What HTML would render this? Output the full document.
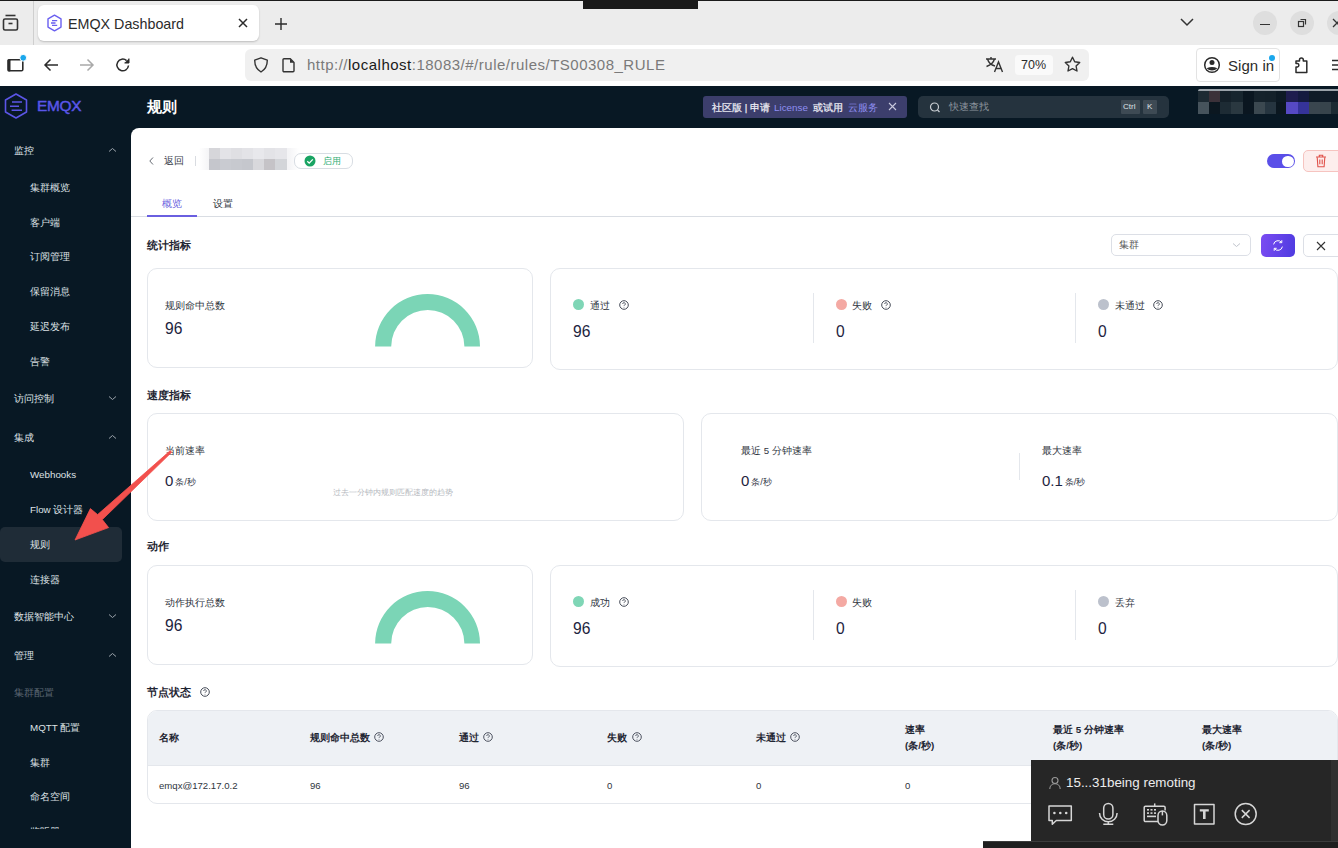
<!DOCTYPE html>
<html><head><meta charset="utf-8">
<style>
*{margin:0;padding:0;box-sizing:border-box}
html,body{width:1338px;height:848px;overflow:hidden;background:#fff;font-family:"Liberation Sans",sans-serif}
.a{position:absolute}
#tabbar{left:0;top:0;width:1338px;height:45px;background:#ececec;border-top:1px solid #1a1a1a}
#toolbar{left:0;top:45px;width:1338px;height:41px;background:#fff}
#app{left:0;top:86px;width:1338px;height:762px;background:#081824}
#card{left:131px;top:128px;width:1207px;height:720px;background:#fff;border-top-left-radius:8px}
.side{color:#dde1e5;font-size:10.2px;white-space:nowrap;line-height:12px;margin-top:1px}
.side.sub{left:30px}
.side.top{left:14px}
.chev{width:6px;height:6px;border-left:1px solid #9aa3ad;border-top:1px solid #9aa3ad}
.h2{font-size:11px;font-weight:bold;color:#1f2633;white-space:nowrap;line-height:12px}
.box{border:1px solid #e4e7ec;border-radius:10px;background:#fff}
.lab{font-size:9.7px;color:#2f3540;white-space:nowrap;line-height:12px}
.cl{margin-top:1px}
.num{margin-top:2px}
.num{font-size:15.6px;color:#1d2440;white-space:nowrap;line-height:16px}
.dot{width:11px;height:11px;border-radius:50%}
.q{width:8px;height:8px;border:1px solid #6b7280;border-radius:50%}
.vdiv{width:1px;background:#e4e7ec}
.th{font-size:9.8px;font-weight:bold;color:#1f2633;white-space:nowrap;line-height:16px;margin-top:1px}
.td{font-size:9.6px;color:#2f3540;white-space:nowrap;line-height:12px;margin-top:1px}
</style></head><body>
<!-- browser chrome -->
<div id="tabbar" class="a"></div>
<div class="a" style="left:583px;top:0;width:115px;height:9px;background:#1a1a1a"></div>
<div class="a" style="left:33px;top:1px;width:1px;height:44px;background:#cfcfcf"></div>
<svg class="a" style="left:0;top:10px" width="26" height="26" viewBox="0 0 26 26"><g fill="none" stroke="#333" stroke-width="1.6"><rect x="3.5" y="9" width="14" height="11" rx="1.5"/><path d="M5.5 5.5h10"/><path d="M8.5 13.5h4" stroke-width="1.6"/></g></svg>
<div class="a" style="left:38px;top:5px;width:221px;height:36px;background:#fff;border-radius:6px;box-shadow:0 1px 2px rgba(0,0,0,.2)"></div>
<svg class="a" style="left:46px;top:14px" width="17" height="18" viewBox="0 0 17 18"><path d="M8.5 1.2L15 4.9v8.2L8.5 16.8 2 13.1V4.9z" fill="none" stroke="#6a5ff0" stroke-width="1.4" stroke-linejoin="round"/><path d="M6 6.6h5.2M5 9h4.5M6 11.4h5.2" stroke="#6a5ff0" stroke-width="1.3"/></svg>
<div class="a" style="left:68px;top:15px;font-size:14.3px;color:#2b2b2b;line-height:18px">EMQX Dashboard</div>
<svg class="a" style="left:237px;top:17px" width="12" height="12" viewBox="0 0 12 12"><path d="M2 2L10 10M10 2L2 10" stroke="#2b2b2b" stroke-width="1.5"/></svg>
<svg class="a" style="left:274px;top:17px" width="14" height="14" viewBox="0 0 14 14"><path d="M7 1v12M1 7h12" stroke="#2b2b2b" stroke-width="1.4"/></svg>
<svg class="a" style="left:1179px;top:16px" width="16" height="12" viewBox="0 0 16 12"><path d="M2 3l6 6 6-6" fill="none" stroke="#333" stroke-width="1.5"/></svg>
<div class="a" style="left:1253px;top:11px;width:24px;height:24px;border-radius:50%;background:#dedede"></div>
<div class="a" style="left:1260px;top:24px;width:10px;height:1px;background:#333"></div>
<div class="a" style="left:1290px;top:11px;width:24px;height:24px;border-radius:50%;background:#dedede"></div>
<svg class="a" style="left:1296px;top:17px" width="12" height="12" viewBox="0 0 12 12"><g fill="none" stroke="#333" stroke-width="1.2"><rect x="2.5" y="4.5" width="5" height="5"/><path d="M4.5 2.5h5v5"/></g></svg>
<div class="a" style="left:1327px;top:11px;width:24px;height:24px;border-radius:50%;background:#dedede"></div>
<svg class="a" style="left:1332px;top:18px" width="10" height="10" viewBox="0 0 10 10"><path d="M1 1l8 8M9 1L1 9" stroke="#333" stroke-width="1.3"/></svg>

<div id="toolbar" class="a"></div>
<svg class="a" style="left:5px;top:52px" width="24" height="22" viewBox="0 0 24 22"><rect x="3.2" y="7.8" width="14.6" height="11" rx="1.3" fill="none" stroke="#2b2b2b" stroke-width="1.6"/><rect x="2.5" y="7.2" width="3" height="12.2" rx="1" fill="#2b2b2b"/><circle cx="18.2" cy="5.8" r="3.4" fill="#1aa7ec" stroke="#fff" stroke-width="1"/></svg>
<svg class="a" style="left:42px;top:56px" width="18" height="18" viewBox="0 0 18 18"><path d="M16 9H3M8.5 3.5L3 9l5.5 5.5" fill="none" stroke="#2b2b2b" stroke-width="1.5"/></svg>
<svg class="a" style="left:78px;top:56px" width="18" height="18" viewBox="0 0 18 18"><path d="M2 9h13M9.5 3.5L15 9l-5.5 5.5" fill="none" stroke="#a9a9a9" stroke-width="1.5"/></svg>
<svg class="a" style="left:114px;top:56px" width="18" height="18" viewBox="0 0 18 18"><path d="M14.5 9.5A5.8 5.8 0 1 1 12.6 4.6" fill="none" stroke="#2b2b2b" stroke-width="1.5"/><path d="M15 2.5v4.5h-4.5" fill="#2b2b2b" stroke="#2b2b2b" stroke-width="1"/></svg>
<div class="a" style="left:245px;top:49px;width:844px;height:32px;background:#f0f0f0;border-radius:6px"></div>
<svg class="a" style="left:252px;top:56px" width="18" height="18" viewBox="0 0 18 18"><path d="M9 1.8L15.3 4.2c0 5.3-2.2 9.3-6.3 11.8C4.9 13.5 2.7 9.5 2.7 4.2z" fill="none" stroke="#333" stroke-width="1.4" stroke-linejoin="round"/></svg>
<svg class="a" style="left:281px;top:57px" width="16" height="16" viewBox="0 0 16 16"><path d="M3 1.8h6.3l3.7 3.7v8.2a1 1 0 0 1-1 1H3a1 1 0 0 1-1-1V2.8a1 1 0 0 1 1-1z" fill="none" stroke="#333" stroke-width="1.4" stroke-linejoin="round"/><path d="M9 1.8v4h4" fill="#333"/></svg>
<div class="a" style="left:307px;top:56px;font-size:15px;color:#7a7a7a;line-height:18px;white-space:nowrap;letter-spacing:0.5px">http://<span style="color:#1a1a1a">localhost</span>:18083/#/rule/rules/TS00308_RULE</div>
<svg class="a" style="left:985px;top:56px" width="20" height="17" viewBox="0 0 20 17"><g fill="none" stroke="#333" stroke-width="1.4"><path d="M1 3h10M6 1v2M2.5 3c1 3.5 3.5 6 7.5 7M9.5 3C8.5 6.5 6 9 1.5 10.5"/><path d="M9.5 16L13.5 6l4 10M11 12.5h5"/></g></svg>
<div class="a" style="left:1015px;top:55px;width:38px;height:20px;background:#fafafa;border-radius:4px"></div>
<div class="a" style="left:1021px;top:57px;font-size:12.5px;color:#2b2b2b;line-height:16px">70%</div>
<svg class="a" style="left:1063px;top:55px" width="19" height="19" viewBox="0 0 19 19"><path d="M9.5 2.2l2.2 4.6 5 .7-3.6 3.5.9 5-4.5-2.4-4.5 2.4.9-5-3.6-3.5 5-.7z" fill="none" stroke="#333" stroke-width="1.4" stroke-linejoin="round"/></svg>
<div class="a" style="left:1196px;top:48px;width:84px;height:34px;border:1px solid #e3e3e3;border-radius:4px;background:#fff"></div>
<svg class="a" style="left:1203px;top:56px" width="18" height="18" viewBox="0 0 18 18"><circle cx="9" cy="9" r="7.3" fill="none" stroke="#2b2b2b" stroke-width="1.5"/><circle cx="9" cy="6.6" r="2.5" fill="#2b2b2b"/><path d="M3.6 12.2Q9 9.6 14.4 12.2A7.3 7.3 0 0 1 3.6 12.2z" fill="#2b2b2b"/></svg>
<div class="a" style="left:1228px;top:57px;font-size:15px;color:#2b2b2b;line-height:18px;letter-spacing:0.05px">Sign in</div>
<div class="a" style="left:1269px;top:55px;width:6px;height:6px;border-radius:50%;background:#1aa7ec"></div>
<svg class="a" style="left:1293px;top:56px" width="17" height="18" viewBox="0 0 17 18"><path d="M3 16.5V11h1.5a1.8 1.8 0 0 0 0-3.5H3V5h3.5V3.8a1.9 1.9 0 0 1 3.8 0V5h3.5v11.5z" fill="none" stroke="#2b2b2b" stroke-width="1.5" stroke-linejoin="round"/></svg>
<svg class="a" style="left:1330px;top:58px" width="10" height="14" viewBox="0 0 10 14"><path d="M2 2.5h10M2 7h10M2 11.5h10" stroke="#2b2b2b" stroke-width="1.5"/></svg>

<!-- app -->
<div id="app" class="a"></div>
<svg class="a" style="left:3px;top:92px" width="26" height="28" viewBox="0 0 26 28"><path d="M13 2L23.5 8v12L13 26 2.5 20V8z" fill="none" stroke="#5b55e6" stroke-width="1.6" stroke-linejoin="round"/><path d="M9 10h10M7 14.2h9M8.6 18.3h10.4" stroke="#5b55e6" stroke-width="1.5"/></svg>
<div class="a" style="left:37px;top:97px;font-size:15.4px;color:#5a56e8;line-height:18px;letter-spacing:-0.3px;-webkit-text-stroke:0.45px #5a56e8">EMQX</div>
<div class="a" style="left:147px;top:98px;font-size:15px;font-weight:bold;color:#fff;line-height:18px">规则</div>
<div class="a" style="left:703px;top:96px;width:204px;height:22px;background:#3c3e6c;border-radius:3px"></div>
<div class="a" style="left:712px;top:102px;font-size:9.8px;color:#ececf4;line-height:12px;white-space:nowrap;-webkit-text-stroke:0.25px #ececf4">社区版 | 申请</div>
<div class="a" style="left:774px;top:102px;font-size:9.9px;color:#8f8ef2;line-height:12px;white-space:nowrap">License</div>
<div class="a" style="left:813px;top:102px;font-size:9.6px;color:#ececf4;line-height:12px;white-space:nowrap;-webkit-text-stroke:0.25px #ececf4">或试用</div>
<div class="a" style="left:848px;top:102px;font-size:9.6px;color:#8f8ef2;line-height:12px;white-space:nowrap">云服务</div>
<svg class="a" style="left:887px;top:101px" width="11" height="11" viewBox="0 0 11 11"><path d="M2 2l7 7M9 2L2 9" stroke="#c9c9dd" stroke-width="1.1"/></svg>
<div class="a" style="left:918px;top:96px;width:251px;height:22px;background:#25333e;border-radius:5px"></div>
<svg class="a" style="left:929px;top:102px" width="12" height="11" viewBox="0 0 12 11"><circle cx="5.5" cy="5" r="4" fill="none" stroke="#c8cdd2" stroke-width="1.2"/><path d="M8.5 8l2 2" stroke="#c8cdd2" stroke-width="1.2"/></svg>
<div class="a" style="left:949px;top:101px;font-size:9.6px;color:#8d969e;line-height:12px;white-space:nowrap">快速查找</div>
<div class="a" style="left:1121px;top:100px;width:19px;height:14px;background:#3e4a54;border-radius:1px"></div>
<div class="a" style="left:1123px;top:102px;font-size:8px;color:#dfe3e6;line-height:10px">Ctrl</div>
<div class="a" style="left:1143px;top:100px;width:14px;height:14px;background:#3e4a54;border-radius:1px"></div>
<div class="a" style="left:1147px;top:102px;font-size:8px;color:#dfe3e6;line-height:10px">K</div>
<div class="a" style="left:1198px;top:89px;width:140px;height:2px;background:#9aa2a9;border-radius:2px 0 0 0"></div>
<div class="a" style="left:1198px;top:91px;display:grid;grid-template-columns:11px 11px 11px 12px 11px 11px 11px 10px 12px 11px 11px 11px 7px;grid-template-rows:11px 12px">
<div style="background:#1d2a33"></div><div style="background:#3b3139"></div><div style="background:#142029"></div><div style="background:#17252e"></div><div style="background:#0a1620"></div><div style="background:#15222b"></div><div style="background:#14212a"></div><div style="background:#0d1a24"></div><div style="background:#1e1d4e"></div><div style="background:#141a3f"></div><div style="background:#0f1b27"></div><div style="background:#101c28"></div><div style="background:#0f1b27"></div>
<div style="background:#46535c"></div><div style="background:#0b1720"></div><div style="background:#1d2b34"></div><div style="background:#2a3840"></div><div style="background:#0a1620"></div><div style="background:#3b4850"></div><div style="background:#263540"></div><div style="background:#0b1720"></div><div style="background:#5649c4"></div><div style="background:#35339a"></div><div style="background:#3a464f"></div><div style="background:#37444c"></div><div style="background:#1b2a33"></div>
</div>

<div class="a side top" style="top:144px">监控</div>
<div class="a side sub" style="top:181px">集群概览</div>
<div class="a side sub" style="top:216px">客户端</div>
<div class="a side sub" style="top:250px">订阅管理</div>
<div class="a side sub" style="top:285px">保留消息</div>
<div class="a side sub" style="top:320px">延迟发布</div>
<div class="a side sub" style="top:355px">告警</div>
<div class="a side top" style="top:392px">访问控制</div>
<div class="a side top" style="top:431px">集成</div>
<div class="a side sub" style="top:468px;font-size:9.8px">Webhooks</div>
<div class="a side sub" style="top:503px"><span style="font-size:9.8px">Flow </span>设计器</div>
<div class="a" style="left:0;top:527px;width:122px;height:35px;background:#1f2c37;border-radius:5px"></div>
<div class="a side sub" style="top:538px">规则</div>
<div class="a side sub" style="top:573px">连接器</div>
<div class="a side top" style="top:610px">数据智能中心</div>
<div class="a side top" style="top:649px">管理</div>
<div class="a side top" style="top:686px;color:#5b6672">集群配置</div>
<div class="a side sub" style="top:721px"><span style="font-size:9.8px">MQTT </span>配置</div>
<div class="a side sub" style="top:756px">集群</div>
<div class="a side sub" style="top:790px">命名空间</div>
<div class="a" style="left:30px;top:824px;width:60px;height:5px;overflow:hidden"><div class="side" style="position:absolute;left:0;top:1px">监听器</div></div>

<svg class="a" style="left:108px;top:147px" width="9" height="6" viewBox="0 0 9 6"><path d="M1 4.5l3.5-3 3.5 3" fill="none" stroke="#9ba3ab" stroke-width="1"/></svg>
<svg class="a" style="left:108px;top:395px" width="9" height="6" viewBox="0 0 9 6"><path d="M1 1.5l3.5 3 3.5-3" fill="none" stroke="#9ba3ab" stroke-width="1"/></svg>
<svg class="a" style="left:108px;top:434px" width="9" height="6" viewBox="0 0 9 6"><path d="M1 4.5l3.5-3 3.5 3" fill="none" stroke="#9ba3ab" stroke-width="1"/></svg>
<svg class="a" style="left:108px;top:613px" width="9" height="6" viewBox="0 0 9 6"><path d="M1 1.5l3.5 3 3.5-3" fill="none" stroke="#9ba3ab" stroke-width="1"/></svg>
<svg class="a" style="left:108px;top:652px" width="9" height="6" viewBox="0 0 9 6"><path d="M1 4.5l3.5-3 3.5 3" fill="none" stroke="#9ba3ab" stroke-width="1"/></svg>
<div id="card" class="a"></div>

<!-- header row -->
<svg class="a" style="left:148px;top:156px" width="7" height="10" viewBox="0 0 7 10"><path d="M5 1.5L1.8 5 5 8.5" fill="none" stroke="#666b73" stroke-width="1"/></svg>
<div class="a lab" style="left:164px;top:155px;color:#3a404a;font-size:9.6px">返回</div>
<div class="a" style="left:195px;top:156px;width:1px;height:10px;background:#d9dce1"></div>
<div class="a" style="left:199px;top:148px;width:100px;height:22px;background:linear-gradient(90deg,rgba(245,245,247,0),#f4f4f6 10%,#f4f4f6 90%,rgba(245,245,247,0))"></div>
<div class="a" style="left:209px;top:148px;display:grid;grid-template-columns:11px 11px 11px 11px 11px 11px 12px;grid-template-rows:11px 11px">
<div style="background:#d6d6da"></div><div style="background:#e3e3e7"></div><div style="background:#dfdfe3"></div><div style="background:#e3e3e7"></div><div style="background:#e8e8ec"></div><div style="background:#e3e3e7"></div><div style="background:#e6e6ea"></div>
<div style="background:#c5c6cc"></div><div style="background:#c9cbd1"></div><div style="background:#c7c9cf"></div><div style="background:#c5c7cd"></div><div style="background:#d8d8dc"></div><div style="background:#c5c3c7"></div><div style="background:#d3d5d9"></div>
</div>
<div class="a" style="left:294px;top:153px;width:59px;height:16px;border:1px solid #d8dde3;border-radius:7px;background:#fff"></div>
<svg class="a" style="left:304px;top:155px" width="12" height="12" viewBox="0 0 12 12"><circle cx="6" cy="6" r="5.5" fill="#19a463"/><path d="M3.3 6.2l1.9 1.9 3.6-3.7" fill="none" stroke="#fff" stroke-width="1.3"/></svg>
<div class="a" style="left:323px;top:155px;font-size:9.4px;color:#2fae74;line-height:12px">启用</div>
<div class="a" style="left:1267px;top:154px;width:28px;height:14px;border-radius:7px;background:#5a4fe8"></div>
<div class="a" style="left:1282px;top:155.5px;width:11.5px;height:11.5px;border-radius:50%;background:#fff"></div>
<div class="a" style="left:1303px;top:150px;width:40px;height:22px;border:1px solid #f6c4c0;border-radius:5px;background:#fdeeed"></div>
<svg class="a" style="left:1315px;top:154px" width="12" height="14" viewBox="0 0 12 14"><g fill="none" stroke="#e0514a" stroke-width="1.1"><path d="M1 3h10M4.3 3V1.3h3.4V3"/><path d="M2.2 3.2l.7 9.5h6.2l.7-9.5"/><path d="M4.8 5.5v4.8M7.2 5.5v4.8"/></g></svg>

<!-- tabs -->
<div class="a" style="left:131px;top:216px;width:1207px;height:1px;background:#d9dde3"></div>
<div class="a lab" style="left:162px;top:198px;color:#6a5fe0;font-size:9.6px">概览</div>
<div class="a" style="left:147px;top:215px;width:50px;height:1.6px;background:#6a5fe0"></div>
<div class="a lab" style="left:213px;top:198px;color:#2f3540;font-size:9.6px">设置</div>

<!-- stats -->
<div class="a h2" style="left:147px;top:239px">统计指标</div>
<div class="a" style="left:1111px;top:234px;width:140px;height:22px;border:1px solid #dcdfe6;border-radius:5px;background:#fff"></div>
<div class="a lab" style="left:1119px;top:239px;color:#555;font-size:9.6px">集群</div>
<svg class="a" style="left:1232px;top:242px" width="9" height="6" viewBox="0 0 9 6"><path d="M1 1.5l3.5 3 3.5-3" fill="none" stroke="#c0c4cc" stroke-width="1"/></svg>
<div class="a" style="left:1261px;top:234px;width:34px;height:23px;border-radius:5px;background:linear-gradient(100deg,#7b4cf2,#4e3be0)"></div>
<svg class="a" style="left:1272px;top:239px" width="12" height="13" viewBox="0 0 12 13"><g fill="none" stroke="#fff" stroke-width="1"><path d="M1.6 5.4A4.5 4.5 0 0 1 9.6 3.4"/><path d="M10.4 7.6A4.5 4.5 0 0 1 2.4 9.6"/><path d="M9.8 1.2v2.5H7.3M2.2 11.8V9.3h2.5"/></g></svg>
<div class="a" style="left:1303px;top:234px;width:40px;height:23px;border:1px solid #dcdfe6;border-radius:5px;background:#fff"></div>
<svg class="a" style="left:1316px;top:241px" width="10" height="10" viewBox="0 0 10 10"><path d="M1 1l8 8M9 1L1 9" stroke="#333" stroke-width="1.1"/></svg>

<div class="a box" style="left:147px;top:268px;width:386px;height:100px"></div>
<div class="a lab cl" style="left:165px;top:299px">规则命中总数</div>
<div class="a num" style="left:165px;top:319px">96</div>
<svg class="a" style="left:374px;top:292.5px" width="108" height="55" viewBox="0 0 108 55"><path d="M1.1 53.5A52.45 52.45 0 0 1 106 53.5H90.4A36.4 36.4 0 0 0 17.2 53.5Z" fill="#7bd5b6"/></svg>

<div class="a box" style="left:550px;top:268px;width:788px;height:102px"></div>
<div class="a dot" style="left:573px;top:299px;background:#7fd6b6"></div>
<div class="a lab cl" style="left:590px;top:299px">通过</div>
<svg class="a" style="left:619px;top:300px" width="10" height="10" viewBox="0 0 10 10"><circle cx="5" cy="5" r="4.3" fill="none" stroke="#464c58" stroke-width="1"/><path d="M3.7 4a1.3 1.3 0 1 1 1.9 1.1c-.5.3-.6.5-.6 1" fill="none" stroke="#464c58" stroke-width="0.9"/><circle cx="5" cy="7.4" r=".45" fill="#464c58"/></svg>
<div class="a num" style="left:573px;top:322px">96</div>
<div class="a vdiv" style="left:813px;top:293px;height:50px"></div>
<div class="a dot" style="left:836px;top:299px;background:#f4a9a3"></div>
<div class="a lab cl" style="left:852px;top:299px">失败</div>
<svg class="a" style="left:881px;top:300px" width="10" height="10" viewBox="0 0 10 10"><circle cx="5" cy="5" r="4.3" fill="none" stroke="#464c58" stroke-width="1"/><path d="M3.7 4a1.3 1.3 0 1 1 1.9 1.1c-.5.3-.6.5-.6 1" fill="none" stroke="#464c58" stroke-width="0.9"/><circle cx="5" cy="7.4" r=".45" fill="#464c58"/></svg>
<div class="a num" style="left:836px;top:322px">0</div>
<div class="a vdiv" style="left:1075px;top:293px;height:50px"></div>
<div class="a dot" style="left:1098px;top:299px;background:#bcc1cc"></div>
<div class="a lab cl" style="left:1115px;top:299px">未通过</div>
<svg class="a" style="left:1153px;top:300px" width="10" height="10" viewBox="0 0 10 10"><circle cx="5" cy="5" r="4.3" fill="none" stroke="#464c58" stroke-width="1"/><path d="M3.7 4a1.3 1.3 0 1 1 1.9 1.1c-.5.3-.6.5-.6 1" fill="none" stroke="#464c58" stroke-width="0.9"/><circle cx="5" cy="7.4" r=".45" fill="#464c58"/></svg>
<div class="a num" style="left:1098px;top:322px">0</div>

<!-- speed -->
<div class="a h2" style="left:147px;top:389px">速度指标</div>
<div class="a box" style="left:147px;top:413px;width:537px;height:108px"></div>
<div class="a lab cl" style="left:165px;top:444px">当前速率</div>
<div class="a num" style="left:165px;top:471px;font-size:15px">0<span style="font-size:9.4px;color:#3c4250;margin-left:2px;position:relative;top:-1.5px">条/秒</span></div>
<div class="a" style="left:333px;top:487px;font-size:8px;color:#b5b9c0;white-space:nowrap">过去一分钟内规则匹配速度的趋势</div>

<div class="a box" style="left:701px;top:413px;width:637px;height:108px"></div>
<div class="a lab cl" style="left:741px;top:444px">最近 5 分钟速率</div>
<div class="a num" style="left:741px;top:471px;font-size:15px">0<span style="font-size:9.4px;color:#3c4250;margin-left:2px;position:relative;top:-1.5px">条/秒</span></div>
<div class="a vdiv" style="left:1019px;top:453px;height:27px"></div>
<div class="a lab cl" style="left:1042px;top:444px">最大速率</div>
<div class="a num" style="left:1042px;top:471px;font-size:15px">0.1<span style="font-size:9.4px;color:#3c4250;margin-left:2px;position:relative;top:-1.5px">条/秒</span></div>

<!-- action -->
<div class="a h2" style="left:147px;top:540px">动作</div>
<div class="a box" style="left:147px;top:565px;width:386px;height:100px"></div>
<div class="a lab cl" style="left:165px;top:596px">动作执行总数</div>
<div class="a num" style="left:165px;top:616px">96</div>
<svg class="a" style="left:374px;top:589.5px" width="108" height="55" viewBox="0 0 108 55"><path d="M1.1 53.5A52.45 52.45 0 0 1 106 53.5H90.4A36.4 36.4 0 0 0 17.2 53.5Z" fill="#7bd5b6"/></svg>

<div class="a box" style="left:550px;top:565px;width:788px;height:102px"></div>
<div class="a dot" style="left:573px;top:596px;background:#7fd6b6"></div>
<div class="a lab cl" style="left:590px;top:596px">成功</div>
<svg class="a" style="left:619px;top:597px" width="10" height="10" viewBox="0 0 10 10"><circle cx="5" cy="5" r="4.3" fill="none" stroke="#464c58" stroke-width="1"/><path d="M3.7 4a1.3 1.3 0 1 1 1.9 1.1c-.5.3-.6.5-.6 1" fill="none" stroke="#464c58" stroke-width="0.9"/><circle cx="5" cy="7.4" r=".45" fill="#464c58"/></svg>
<div class="a num" style="left:573px;top:619px">96</div>
<div class="a vdiv" style="left:813px;top:590px;height:50px"></div>
<div class="a dot" style="left:836px;top:596px;background:#f4a9a3"></div>
<div class="a lab cl" style="left:852px;top:596px">失败</div>
<div class="a num" style="left:836px;top:619px">0</div>
<div class="a vdiv" style="left:1075px;top:590px;height:50px"></div>
<div class="a dot" style="left:1098px;top:596px;background:#bcc1cc"></div>
<div class="a lab cl" style="left:1115px;top:596px">丢弃</div>
<div class="a num" style="left:1098px;top:619px">0</div>

<!-- node status -->
<div class="a h2" style="left:147px;top:686px">节点状态</div>
<div class="a" style="left:147px;top:710px;width:1191px;height:94px;border:1px solid #e4e7ec;border-radius:10px;overflow:hidden">
  <div style="position:absolute;left:0;top:0;width:100%;height:55px;background:#eef1f5;border-bottom:1px solid #e4e7ec"></div>
</div>
<div class="a th" style="left:159px;top:729px">名称</div>
<div class="a th" style="left:310px;top:729px">规则命中总数</div>
<div class="a th" style="left:459px;top:729px">通过</div>
<div class="a th" style="left:607px;top:729px">失败</div>
<div class="a th" style="left:756px;top:729px">未通过</div>
<div class="a th" style="left:905px;top:721px">速率<br>(条/秒)</div>
<div class="a th" style="left:1053px;top:721px">最近 5 分钟速率<br>(条/秒)</div>
<div class="a th" style="left:1202px;top:721px">最大速率<br>(条/秒)</div>
<div class="a td" style="left:159px;top:779px">emqx@172.17.0.2</div>
<div class="a td" style="left:310px;top:779px">96</div>
<div class="a td" style="left:459px;top:779px">96</div>
<div class="a td" style="left:607px;top:779px">0</div>
<div class="a td" style="left:756px;top:779px">0</div>
<div class="a td" style="left:905px;top:779px">0</div>

<svg class="a" style="left:200px;top:687px" width="10" height="10" viewBox="0 0 10 10"><circle cx="5" cy="5" r="4.3" fill="none" stroke="#464c58" stroke-width="1"/><path d="M3.7 4a1.3 1.3 0 1 1 1.9 1.1c-.5.3-.6.5-.6 1" fill="none" stroke="#464c58" stroke-width="0.9"/><circle cx="5" cy="7.4" r=".45" fill="#464c58"/></svg>
<svg class="a" style="left:374px;top:732px" width="10" height="10" viewBox="0 0 10 10"><circle cx="5" cy="5" r="4.3" fill="none" stroke="#3c4250" stroke-width="0.9"/><path d="M3.7 4a1.3 1.3 0 1 1 1.9 1.1c-.5.3-.6.5-.6 1" fill="none" stroke="#3c4250" stroke-width="0.8"/><circle cx="5" cy="7.4" r=".45" fill="#3c4250"/></svg>
<svg class="a" style="left:483px;top:732px" width="10" height="10" viewBox="0 0 10 10"><circle cx="5" cy="5" r="4.3" fill="none" stroke="#3c4250" stroke-width="0.9"/><path d="M3.7 4a1.3 1.3 0 1 1 1.9 1.1c-.5.3-.6.5-.6 1" fill="none" stroke="#3c4250" stroke-width="0.8"/><circle cx="5" cy="7.4" r=".45" fill="#3c4250"/></svg>
<svg class="a" style="left:632px;top:732px" width="10" height="10" viewBox="0 0 10 10"><circle cx="5" cy="5" r="4.3" fill="none" stroke="#3c4250" stroke-width="0.9"/><path d="M3.7 4a1.3 1.3 0 1 1 1.9 1.1c-.5.3-.6.5-.6 1" fill="none" stroke="#3c4250" stroke-width="0.8"/><circle cx="5" cy="7.4" r=".45" fill="#3c4250"/></svg>
<svg class="a" style="left:790px;top:732px" width="10" height="10" viewBox="0 0 10 10"><circle cx="5" cy="5" r="4.3" fill="none" stroke="#3c4250" stroke-width="0.9"/><path d="M3.7 4a1.3 1.3 0 1 1 1.9 1.1c-.5.3-.6.5-.6 1" fill="none" stroke="#3c4250" stroke-width="0.8"/><circle cx="5" cy="7.4" r=".45" fill="#3c4250"/></svg>
<!-- remote overlay -->
<div class="a" style="left:1031px;top:760px;width:307px;height:81px;background:#262626"></div>
<div class="a" style="left:1331px;top:760px;width:7px;height:81px;background:#303030"></div>
<div class="a" style="left:983px;top:841px;width:355px;height:7px;background:#1f1f1f;border-top:1px solid #3c3c3c"></div>
<svg class="a" style="left:1048px;top:776px" width="14" height="14" viewBox="0 0 14 14"><g fill="none" stroke="#9a9a9a" stroke-width="1.1"><circle cx="7" cy="4.5" r="3"/><path d="M1.8 13c0-3 2.3-5.2 5.2-5.2s5.2 2.2 5.2 5.2"/></g></svg>
<div class="a" style="left:1066px;top:775px;font-size:13.4px;color:#ececec;line-height:15px;white-space:nowrap">15...31being remoting</div>
<svg class="a" style="left:1045px;top:801px" width="220" height="27" viewBox="1045 801 220 27"><g fill="none" stroke="#d6d6d6" stroke-width="1.5" stroke-linejoin="round">
<path d="M1049 806h22.3v14.5h-15l-4 3.8v-3.8h-3.3z"/>
<path d="M1108.3 803.5a4.6 4.6 0 0 1 4.6 4.6v6.4a4.6 4.6 0 0 1-9.2 0v-6.4a4.6 4.6 0 0 1 4.6-4.6z"/>
<path d="M1099.5 813a8.8 8.8 0 0 0 17.6 0M1108.3 822v2.3M1103.3 824.3h10"/>
<path d="M1158 821.5h-12.5a1.3 1.3 0 0 1-1.3-1.3V807.5a1.3 1.3 0 0 1 1.3-1.3h18.3a1.3 1.3 0 0 1 1.3 1.3v3"/>
<path d="M1154.7 806.2v-2.8"/>
<rect x="1158" y="811" width="8.8" height="14" rx="4.4"/>
<path d="M1162.4 811v4.4"/>
<rect x="1194.5" y="804.5" width="19.5" height="19.5"/>
<circle cx="1245.7" cy="814" r="10.5"/>
<path d="M1241.8 810.1l7.8 7.8M1249.6 810.1l-7.8 7.8"/>
</g>
<g fill="#d6d6d6"><circle cx="1054.4" cy="813" r="1.3"/><circle cx="1060.3" cy="813" r="1.3"/><circle cx="1066.2" cy="813" r="1.3"/>
<rect x="1147" y="809" width="2" height="1.6"/><rect x="1150.5" y="809" width="2" height="1.6"/><rect x="1154" y="809" width="2" height="1.6"/><rect x="1147" y="812.3" width="2" height="1.6"/><rect x="1150.5" y="812.3" width="2" height="1.6"/><rect x="1154" y="812.3" width="2" height="1.6"/><rect x="1147" y="815.6" width="9" height="1.6"/>
<path d="M1199.8 809.2h9v2.4h-3.2v7.4h-2.6v-7.4h-3.2z"/></g>
</svg>

<!-- red arrow -->
<svg class="a" style="left:0;top:0" width="1338" height="848" viewBox="0 0 1338 848"><path d="M170.3 450.6L171.6 452.3L102.3 519.6L108.6 527.6L75 540L90.4 508.6L97.6 514.6Z" fill="#f2504d" stroke="#f2504d" stroke-width="0.8" stroke-linejoin="round"/></svg>
</body></html>
